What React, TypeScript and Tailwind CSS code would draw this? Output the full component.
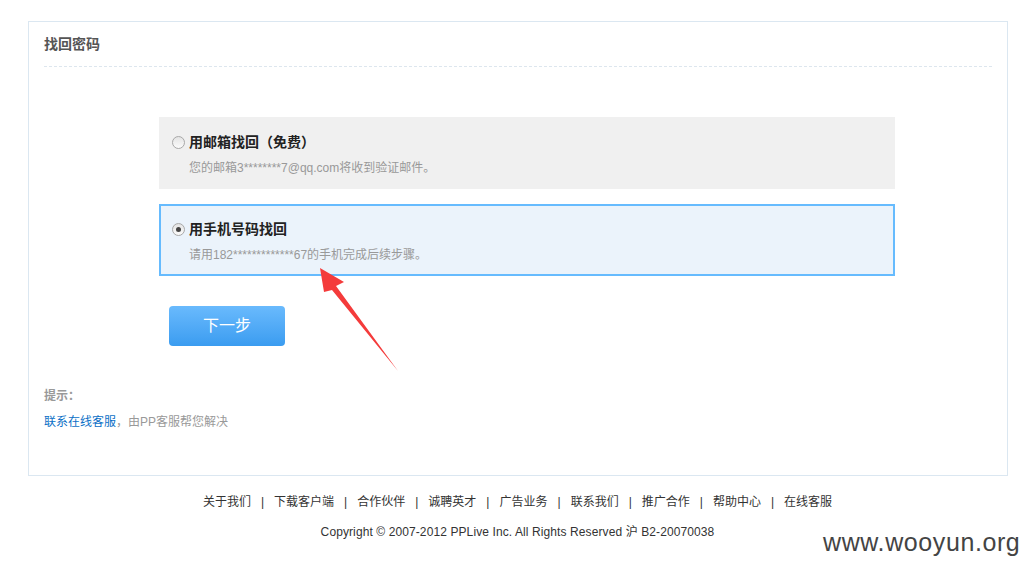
import React, { useState } from 'react';

const font = "font-['Liberation_Sans','Noto_Sans_CJK_SC',sans-serif]";

const links = ['关于我们', '下载客户端', '合作伙伴', '诚聘英才', '广告业务', '联系我们', '推广合作', '帮助中心', '在线客服'];

const Radio: React.FC<{ checked: boolean }> = ({ checked }) => (
  <span className="flex h-[13px] w-[13px] items-center justify-center rounded-full border border-[#a8a8a8] bg-gradient-to-b from-[#e4e4e4] to-[#fbfbfb]">
    {checked && <span className="h-[5px] w-[5px] rounded-full bg-[#444]" />}
  </span>
);

export default function App() {
  const [mode, setMode] = useState<'mail' | 'phone'>('phone');

  return (
    <div className={`relative min-h-[572px] w-[1029px] bg-white ${font}`}>
      <div className="pt-[21px]">
        <div className="ml-[28px] h-[455px] w-[980px] border border-[#dbe7f1] px-[15px]">
          <h2 className="pt-[12px] text-[14px] font-bold leading-[20px] text-[#555]">找回密码</h2>
          <div className="mt-[12px] border-t border-dashed border-[#dde6ee]" />

          <div className="ml-[115px] mt-[50px] w-[736px]">
            <div
              onClick={() => setMode('mail')}
              className={`h-[72px] cursor-pointer pl-[13px] pt-[15px] ${mode === 'mail' ? 'border-2 border-[#66bbfe] bg-[#ebf3fb]' : 'bg-[#f0f0f0]'}`}
            >
              <div className="flex items-center gap-[4px]">
                <Radio checked={mode === 'mail'} />
                <span className="text-[14px] font-bold leading-[20px] text-[#222]">用邮箱找回（免费）</span>
              </div>
              <p className="mt-[8px] pl-[17px] text-[12px] leading-[16px] text-[#999]">您的邮箱3********7@qq.com将收到验证邮件。</p>
            </div>

            <div
              onClick={() => setMode('phone')}
              className={`mt-[15px] h-[72px] cursor-pointer pl-[11px] pt-[13px] ${mode === 'phone' ? 'border-2 border-[#66bbfe] bg-[#ebf3fb]' : 'bg-[#f0f0f0]'}`}
            >
              <div className="flex items-center gap-[4px]">
                <Radio checked={mode === 'phone'} />
                <span className="text-[14px] font-bold leading-[20px] text-[#222]">用手机号码找回</span>
              </div>
              <p className="mt-[8px] pl-[17px] text-[12px] leading-[16px] text-[#999]">请用182*************67的手机完成后续步骤。</p>
            </div>

            <button className="ml-[10px] mt-[30px] h-[40px] w-[116px] rounded-[4px] bg-gradient-to-b from-[#69bafd] to-[#3a9cf0] text-[16px] text-white">
              下一步
            </button>
          </div>

          <p className="mt-[42px] text-[12px] font-bold leading-[16px] text-[#999]">提示：</p>
          <p className="mt-[10px] text-[12px] leading-[16px] text-[#999]">
            <a className="text-[#0b6fc6]">联系在线客服</a>，由PP客服帮您解决
          </p>
        </div>
      </div>

      <div className="mt-[18px] flex justify-center pl-[6px] text-[12px] leading-[16px] text-[#333]">
        {links.map((l, i) => (
          <React.Fragment key={l}>
            {i > 0 && <span className="px-[10px]">|</span>}
            <span>{l}</span>
          </React.Fragment>
        ))}
      </div>
      <p className="mt-[14px] pl-[6px] text-center text-[12px] leading-[16px] tracking-[0.1px] text-[#333]">
        Copyright © 2007-2012 PPLive Inc. All Rights Reserved 沪 B2-20070038
      </p>

      <div className="absolute left-[823px] top-[527px] whitespace-nowrap font-['Liberation_Sans',sans-serif] text-[25px] leading-[30px] tracking-[0.6px] text-[#444]">
        www.wooyun.org
      </div>

      <svg className="pointer-events-none absolute left-0 top-0" width="1029" height="572">
        <polygon points="320,268 344,282 336,286 398,371 332,290 324,292" fill="#f43b3b" />
      </svg>
    </div>
  );
}
